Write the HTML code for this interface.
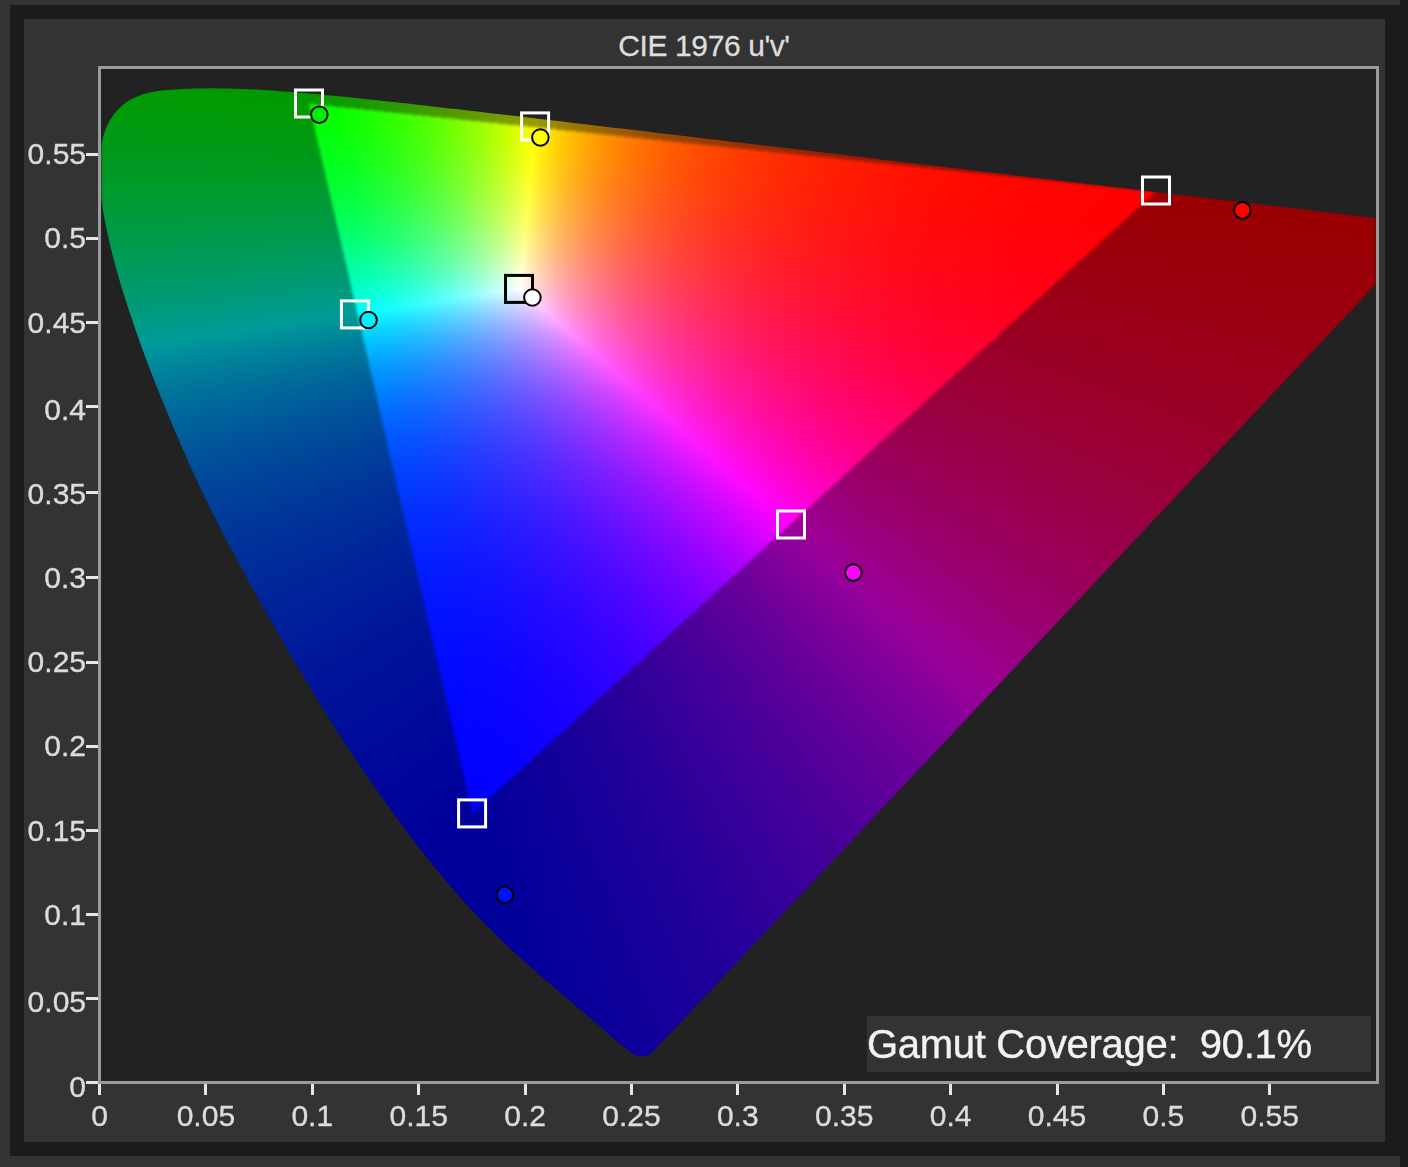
<!DOCTYPE html>
<html><head><meta charset="utf-8">
<style>
html,body{margin:0;padding:0;}
body{width:1408px;height:1167px;background:#333333;position:relative;overflow:hidden;font-family:"Liberation Sans",sans-serif;}
.strip{position:absolute;left:1400px;top:0;width:8px;height:1167px;background:#1a1a1a;}
.frame{position:absolute;left:10px;top:5px;width:1390px;height:1151px;background:#1b1b1b;}
.panel{position:absolute;left:24px;top:19px;width:1361px;height:1123px;background:#333333;}
.title{position:absolute;left:0;top:29px;width:1408px;text-align:center;color:#dedede;-webkit-text-stroke:0.3px #dedede;font-size:30px;line-height:33px;letter-spacing:-0.4px;}
.plot{position:absolute;left:98px;top:66px;width:1275px;height:1012px;border:3px solid #9b9b9b;background:#222222;}
#c{position:absolute;left:101px;top:69px;}
#mk{position:absolute;left:0;top:0;}
.yl{position:absolute;right:1322px;color:#dcdcdc;-webkit-text-stroke:0.35px #dcdcdc;font-size:30px;line-height:30px;text-align:right;white-space:nowrap;}
.xl{position:absolute;width:100px;color:#dcdcdc;-webkit-text-stroke:0.35px #dcdcdc;font-size:30px;line-height:30px;text-align:center;white-space:nowrap;}
.ty{position:absolute;left:86px;width:12px;height:3px;background:#e6e6e6;}
.tx{position:absolute;top:1084px;width:3px;height:11px;background:#e6e6e6;}
.gam{position:absolute;left:867px;top:1016px;width:504px;height:56px;background:#333333;color:#f2f2f2;-webkit-text-stroke:0.4px #f2f2f2;font-size:40px;line-height:56px;white-space:pre;}
.gam span{position:relative;left:0px;letter-spacing:-0.3px;}
</style></head>
<body>
<div class="strip"></div>
<div class="frame"></div>
<div class="panel"></div>
<div class="title">CIE 1976 u'v'</div>
<div class="plot"></div>
<canvas id="c" width="1275" height="1012"></canvas>
<svg id="mk" width="1408" height="1167"></svg>
<div id="axes"></div>
<div class="gam"><span>Gamut Coverage:  90.1%</span></div>
<script>
(function(){
var GAM=1.4, GAMD=1.1;
var X0=99.1, SX=2129, Y0=1080.6, SY=1691, CL=101, CT=69, W=1275, H=1012;
function uvRGB(u,v){
  var den=6*u-16*v+12, x=9*u/den, y=4*v/den;
  if(y<1e-4)y=1e-4;
  var X=x/y, Z=(1-x-y)/y;
  var r= 2.4934969*X-0.9313836-0.4027108*Z;
  var g=-0.8294890*X+1.7626641+0.0236247*Z;
  var b= 0.0358458*X-0.0761724+0.9568845*Z;
  var out=(r<0||g<0||b<0);
  if(r<0)r=0; if(g<0)g=0; if(b<0)b=0;
  var m=Math.max(r,g,b); if(m<=0)m=1;
  r/=m;g/=m;b/=m; var gm=out?GAMD:GAM; r=Math.pow(r,gm);g=Math.pow(g,gm);b=Math.pow(b,gm);
  return [r,g,b,out];
}
var xy=[[0.1741,0.0050],[0.1740,0.0050],[0.1738,0.0049],[0.1736,0.0049],[0.1733,0.0048],[0.1730,0.0048],[0.1726,0.0048],[0.1721,0.0048],[0.1714,0.0051],[0.1703,0.0058],[0.1689,0.0069],[0.1669,0.0086],[0.1644,0.0109],[0.1611,0.0138],[0.1566,0.0177],[0.1510,0.0227],[0.1440,0.0297],[0.1355,0.0399],[0.1241,0.0578],[0.1096,0.0868],[0.0913,0.1327],[0.0687,0.2007],[0.0454,0.2950],[0.0235,0.4127],[0.0082,0.5384],[0.0039,0.6548],[0.0139,0.7502],[0.0389,0.8120],[0.0743,0.8338],[0.1142,0.8262],[0.1547,0.8059],[0.1929,0.7816],[0.2296,0.7543],[0.2658,0.7243],[0.3016,0.6923],[0.3373,0.6589],[0.3731,0.6245],[0.4087,0.5896],[0.4441,0.5547],[0.4788,0.5202],[0.5125,0.4866],[0.5448,0.4544],[0.5752,0.4242],[0.6029,0.3965],[0.6270,0.3725],[0.6482,0.3514],[0.6658,0.3340],[0.6801,0.3197],[0.6915,0.3083],[0.7006,0.2993],[0.7079,0.2920],[0.7140,0.2859],[0.7190,0.2809],[0.7230,0.2770],[0.7260,0.2740],[0.7283,0.2717],[0.7300,0.2700],[0.7311,0.2689],[0.7320,0.2680],[0.7347,0.2653]];
var P=[];
for(var j=0;j<xy.length;j++){
  var xx=xy[j][0], yy=xy[j][1], dn=-2*xx+12*yy+3;
  P.push([X0+SX*(4*xx/dn)-CL, Y0-SY*(9*yy/dn)-CT]);
}
// Catmull-Rom smoothing
var S=[];
for(var j=0;j<P.length-1;j++){
  var p0=P[Math.max(j-1,0)],p1=P[j],p2=P[j+1],p3=P[Math.min(j+2,P.length-1)];
  for(var t=0;t<1;t+=0.125){
    var t2=t*t,t3=t2*t;
    S.push([0.5*((2*p1[0])+(-p0[0]+p2[0])*t+(2*p0[0]-5*p1[0]+4*p2[0]-p3[0])*t2+(-p0[0]+3*p1[0]-3*p2[0]+p3[0])*t3),
            0.5*((2*p1[1])+(-p0[1]+p2[1])*t+(2*p0[1]-5*p1[1]+4*p2[1]-p3[1])*t2+(-p0[1]+3*p1[1]-3*p2[1]+p3[1])*t3)]);
  }
}
S.push(P[P.length-1]);
(function(){var T=[S[0]];for(var j=1;j<S.length;j++){var l=T[T.length-1];if(Math.hypot(S[j][0]-l[0],S[j][1]-l[1])>=2||j==S.length-1)T.push(S[j]);}S=T;})();
var cv=document.getElementById('c'), ctx=cv.getContext('2d');
var off=document.createElement('canvas'); off.width=W; off.height=H;
var oc=off.getContext('2d');
var img=oc.createImageData(W,H), d=img.data;
var K=0.6;
for(var py=0;py<H;py++){
  var v=(Y0-(CT+py+0.5))/SY;
  for(var px=0;px<W;px++){
    var u=(CL+px+0.5-X0)/SX;
    var c=uvRGB(u,v), k=c[3]?K:1;
    var i=(py*W+px)*4;
    d[i]=c[0]*k*255+0.5; d[i+1]=c[1]*k*255+0.5; d[i+2]=c[2]*k*255+0.5; d[i+3]=255;
  }
}
oc.putImageData(img,0,0);
var off2=document.createElement('canvas'); off2.width=W; off2.height=H;
var o2=off2.getContext('2d');
o2.filter='blur(1.5px)';
o2.drawImage(off,0,0);
// mask polygon with outward offsets and rounded tip
function nrm(a,b){var dx=b[0]-a[0],dy=b[1]-a[1],l=Math.sqrt(dx*dx+dy*dy)||1;return [dx/l,dy/l];}
var N=S.length, SO=[];
function near(p){var bi=0,bd=1e9;for(var q=0;q<S.length;q++){var dq=Math.hypot(S[q][0]-p[0],S[q][1]-p[1]);if(dq<bd){bd=dq;bi=q;}}return bi;}
var i505=near(P[25]), i525=near(P[29]);
for(var j=0;j<N;j++){
  var a=S[Math.max(j-2,0)], b=S[Math.min(j+2,N-1)], t=nrm(a,b);
  var dd = j<=i505?3:(j<i525?3*(i525-j)/(i525-i505):0);
  SO.push([S[j][0]+t[1]*dd, S[j][1]-t[0]*dd]);
}
var A=S[N-1], B0=S[0], pe=nrm(A,B0), nx=pe[1], ny=-pe[0];
var OFF=4.5;
var Ap=[A[0]+nx*OFF,A[1]+ny*OFF], Bp=[B0[0]+nx*OFF,B0[1]+ny*OFF];
var e1=nrm(Bp,Ap);
ctx.beginPath();
ctx.moveTo(Bp[0],Bp[1]);
for(var j=0;j<N;j++) ctx.lineTo(SO[j][0],SO[j][1]);
ctx.lineTo(Ap[0],Ap[1]);
ctx.closePath();
ctx.fillStyle='#fff'; ctx.fill();
// round the tip: erase sliver outside fillet circle
var k1=0; while(k1<N-1 && Math.hypot(SO[k1][0]-SO[0][0],SO[k1][1]-SO[0][1])<30) k1++;
var k2=k1; while(k2<N-1 && Math.hypot(SO[k2][0]-SO[0][0],SO[k2][1]-SO[0][1])<70) k2++;
var e2=nrm(SO[k2],SO[k1]); // pointing toward tip
var den=e1[0]*e2[1]-e1[1]*e2[0];
var tt=((SO[k1][0]-Bp[0])*e2[1]-(SO[k1][1]-Bp[1])*e2[0])/den;
var V=[Bp[0]+e1[0]*tt, Bp[1]+e1[1]*tt];
var f2=[-e2[0],-e2[1]];
var cosT=e1[0]*f2[0]+e1[1]*f2[1], th=Math.acos(Math.max(-1,Math.min(1,cosT)));
var R=window.TIPR||12, tl=R/Math.tan(th/2);
var T1=[V[0]+e1[0]*tl,V[1]+e1[1]*tl], T2=[V[0]+f2[0]*tl,V[1]+f2[1]*tl];
var bis=nrm([0,0],[e1[0]+f2[0],e1[1]+f2[1]]), dc=R/Math.sin(th/2);
var Cc=[V[0]+bis[0]*dc, V[1]+bis[1]*dc];
var a1=Math.atan2(T1[1]-Cc[1],T1[0]-Cc[0]), a2=Math.atan2(T2[1]-Cc[1],T2[0]-Cc[0]);
var da=a1-a2; while(da>Math.PI)da-=2*Math.PI; while(da<-Math.PI)da+=2*Math.PI;
ctx.save();
ctx.globalCompositeOperation='destination-out';
ctx.beginPath();
ctx.moveTo(T1[0]+e1[0]*0,T1[1]+e1[1]*0);
ctx.lineTo(T1[0]-bis[0]*20,T1[1]-bis[1]*20);
ctx.lineTo(V[0]-bis[0]*25,V[1]-bis[1]*25);
ctx.lineTo(T2[0]-bis[0]*20,T2[1]-bis[1]*20);
ctx.lineTo(T2[0],T2[1]);
ctx.arc(Cc[0],Cc[1],R,a2,a1,da<0);
ctx.closePath();
ctx.fill();
ctx.restore();
ctx.globalCompositeOperation='source-in';
ctx.drawImage(off2,0,0);
// markers
var svg=document.getElementById('mk'), s='';
var sq=[[309,103.5,'#fff'],[535.1,126.4,'#fff'],[1156,190.5,'#fff'],[354.9,314.4,'#fff'],[519,288.9,'#000'],[791,524.5,'#fff'],[472.1,813.4,'#fff']];
for(var j=0;j<sq.length;j++){
  s+='<rect x="'+(sq[j][0]-13.5)+'" y="'+(sq[j][1]-13.5)+'" width="27" height="27" fill="none" stroke="'+sq[j][2]+'" stroke-width="3"/>';
}
var ci=[[319.3,114.7,'#00ee00'],[540.4,137.5,'#ffff00'],[1242.4,210.4,'#ff0000'],[368.5,320,'#00f0ff'],[532.4,297.5,'#ffffff'],[853.4,572.6,'#ff00ff'],[504.8,894.9,'#0010ff']];
for(var j=0;j<ci.length;j++){
  var col=ci[j][2];
  s+='<circle cx="'+ci[j][0]+'" cy="'+ci[j][1]+'" r="8.3" fill="'+col+'" stroke="#000" stroke-width="2"/>';
}
svg.innerHTML=s;
// axes
var TX0=99.5, TSX=2127.8, TY0=1082.2, TSY=1686.7;
var ax=document.getElementById('axes'), h='';
var labs=['0','0.05','0.1','0.15','0.2','0.25','0.3','0.35','0.4','0.45','0.5','0.55'];
var tyc=[1082.2,998.6,914.2,830,746.4,662.2,577.8,492.5,406.8,322.7,238.2,154.5];
var lyc=[1087,1002.5,915.6,831.3,746.6,662.5,578.4,494.4,410.6,323.5,238.6,154.5];
for(var i=0;i<12;i++){
  var vv=i*0.05, x=TX0+TSX*vv;
  h+='<div class="ty" style="top:'+(tyc[i]-1.5).toFixed(1)+'px"></div>';
  h+='<div class="yl" style="top:'+(lyc[i]-15.4).toFixed(1)+'px">'+labs[i]+'</div>';
  h+='<div class="tx" style="left:'+(x-1.5).toFixed(1)+'px"></div>';
  h+='<div class="xl" style="left:'+(x-50).toFixed(1)+'px;top:1101.3px">'+labs[i]+'</div>';
}
ax.innerHTML=h;
})();
</script>
</body></html>
